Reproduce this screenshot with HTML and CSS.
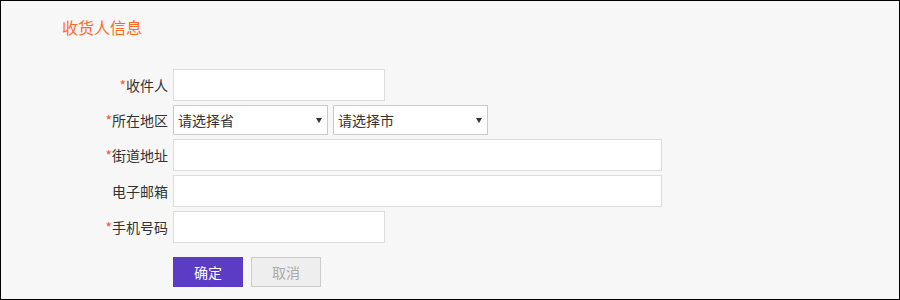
FILE: index.html
```html
<!DOCTYPE html>
<html lang="zh-CN">
<head>
  <meta charset="UTF-8">
  <title>收货人信息</title>
  <link rel="stylesheet" href="styles.css">
</head>
<body>
  <div class="panel">
    <h2 class="title">收货人信息</h2>

    <!-- Consignee form -->
    <form class="form">
      <div class="row">
        <label class="label"><span class="req">*</span>收件人</label>
        <input type="text" class="field short">
      </div>
      <div class="row">
        <label class="label"><span class="req">*</span>所在地区</label>
        <span class="select-wrap">
          <select class="select"><option>请选择省</option></select>
        </span>
        <span class="select-wrap">
          <select class="select"><option>请选择市</option></select>
        </span>
      </div>
      <div class="row">
        <label class="label"><span class="req">*</span>街道地址</label>
        <input type="text" class="field long">
      </div>
      <div class="row">
        <label class="label">电子邮箱</label>
        <input type="text" class="field long">
      </div>
      <div class="row">
        <label class="label"><span class="req">*</span>手机号码</label>
        <input type="text" class="field short">
      </div>
      <div class="actions">
        <button type="button" class="btn primary">确定</button>
        <button type="button" class="btn cancel">取消</button>
      </div>
    </form>
  </div>
</body>
</html>
```

FILE: styles.css
```css
/* Base */
* {
  box-sizing: border-box;
  margin: 0;
  padding: 0;
}

body {
  font-family: "Noto Sans CJK SC", "Liberation Sans", sans-serif;
  font-size: 14px;
  color: #333;
  background: #fff;
}

/* Panel */
.panel {
  width: 900px;
  height: 300px;
  border: 1px solid #000;
  background-color: #f7f7f7;
  padding: 14px 0 0 61px;
}

.title {
  font-size: 16px;
  font-weight: normal;
  line-height: 24px;
  color: #ff6a1f;
}

/* Form */
.form {
  margin-top: 30px;
}

.row {
  display: flex;
  align-items: center;
  gap: 5px;
  margin-bottom: 4px;
}

.label {
  width: 106px;
  text-align: right;
  line-height: 20px;
  color: #333;
}

.req {
  color: #f5553b;
}

.field {
  height: 32px;
  border: 1px solid #dcdcdc;
  background-color: #fff;
  padding: 0 5px;
  font: inherit;
  outline: none;
}

.field.short {
  width: 212px;
}

.field.long {
  width: 489px;
}

/* Selects */
.select-wrap {
  position: relative;
  display: block;
}

.select-wrap::after {
  content: '';
  position: absolute;
  right: 6px;
  top: 13px;
  border-left: 3.5px solid transparent;
  border-right: 3.5px solid transparent;
  border-top: 5px solid #333;
  pointer-events: none;
}

.select {
  appearance: none;
  -webkit-appearance: none;
  width: 155px;
  height: 30px;
  border: 1px solid #cacaca;
  border-radius: 0;
  background-color: #fff;
  padding: 0 20px 0 4px;
  font: inherit;
  color: #333;
  outline: none;
}

/* Buttons */
.actions {
  display: flex;
  gap: 8px;
  margin-top: 14px;
  padding-left: 111px;
}

.btn {
  width: 70px;
  height: 30px;
  font: inherit;
  cursor: pointer;
}

.btn.primary {
  background-color: #5b3cc4;
  border: none;
  color: #fff;
}

.btn.cancel {
  background-color: #eee;
  border: 1px solid #ccc;
  color: #aaa;
}
```
